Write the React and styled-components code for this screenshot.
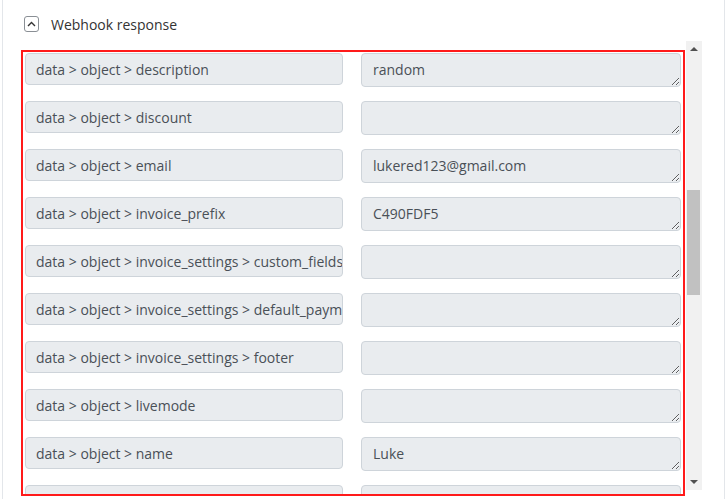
import React from "react";
import styled, { createGlobalStyle } from "styled-components";

const GlobalStyle = createGlobalStyle`
  html, body {
    margin: 0;
    padding: 0;
    background: #ffffff;
    font-family: "Open Sans", "Noto Sans", Arial, sans-serif;
  }
`;

const Panel = styled.div`
  margin-left: 2px;
  width: 721px;
  height: 499px;
  border-left: 1px solid #e3e6ea;
  border-right: 1px solid #e3e6ea;
  overflow: hidden;
`;

const Header = styled.div`
  display: flex;
  align-items: center;
  gap: 12px;
  height: 24px;
  padding: 12px 0 5px 21px;
`;

const ToggleButton = styled.button`
  width: 15px;
  height: 16px;
  padding: 0;
  display: flex;
  align-items: center;
  justify-content: center;
  background: #fff;
  border: 1px solid #8a8f95;
  border-radius: 3px;
  cursor: pointer;
`;

const Title = styled.span`
  font-size: 14px;
  color: #333333;
`;

const Body = styled.div`
  display: flex;
  align-items: flex-start;
  padding-left: 18px;
`;

const Highlight = styled.div`
  margin-top: 9px;
  width: 656px;
  height: 441px;
  border: 2px solid #ff1a1a;
  padding: 1px 2px 0 2px;
  overflow: hidden;
  display: flex;
  flex-direction: column;
  gap: 14px;
  flex-shrink: 0;
`;

const Row = styled.div`
  display: flex;
  gap: 18px;
  flex-shrink: 0;
`;

const Key = styled.div`
  box-sizing: border-box;
  width: 318px;
  height: 32px;
  padding: 1px 10px 0;
  display: flex;
  align-items: center;
  background: #e9ecef;
  border: 1px solid #ced4da;
  border-radius: 4px;
  font-size: 14px;
  color: #495057;
  white-space: nowrap;
  overflow: hidden;
`;

const Value = styled.textarea`
  box-sizing: border-box;
  width: 320px;
  height: 34px;
  margin: 0;
  padding: 6px 11px 4px;
  background: #e9ecef;
  border: 1px solid #ced4da;
  border-radius: 4px;
  font-family: "Open Sans", "Noto Sans", Arial, sans-serif;
  font-size: 14px;
  line-height: 20px;
  color: #495057;
  resize: vertical;
  outline: none;
  overflow: hidden;
`;

const Scrollbar = styled.div`
  width: 16px;
  height: 449px;
  margin-left: 1px;
  flex-shrink: 0;
  background: #f1f1f1;
  position: relative;
`;

const Arrow = styled.div`
  position: absolute;
  left: 4px;
  width: 0;
  height: 0;
  border-left: 4px solid transparent;
  border-right: 4px solid transparent;
  ${(p) =>
    p.$down
      ? `bottom: 6px; border-top: 4px solid #505050;`
      : `top: 6px; border-bottom: 4px solid #505050;`}
`;

const Thumb = styled.div`
  position: absolute;
  left: 1px;
  top: 149px;
  width: 13px;
  height: 105px;
  background: #c1c1c1;
`;

const rows = [
  ["data > object > description", "random"],
  ["data > object > discount", ""],
  ["data > object > email", "lukered123@gmail.com"],
  ["data > object > invoice_prefix", "C490FDF5"],
  ["data > object > invoice_settings > custom_fields", ""],
  ["data > object > invoice_settings > default_payment_method", ""],
  ["data > object > invoice_settings > footer", ""],
  ["data > object > livemode", ""],
  ["data > object > name", "Luke"],
  ["data > object > next_invoice_sequence", "1"],
];

const App = () => {
  return (
    <Panel>
      <GlobalStyle />
      <Header>
        <ToggleButton aria-label="collapse">
          <svg width="9" height="6" viewBox="0 0 9 6">
            <path d="M1 5 L4.5 1.5 L8 5" fill="none" stroke="#333" strokeWidth="1.4" />
          </svg>
        </ToggleButton>
        <Title>Webhook response</Title>
      </Header>
      <Body>
        <Highlight>
          {rows.map(([k, v]) => (
            <Row key={k}>
              <Key>{k}</Key>
              <Value readOnly value={v} />
            </Row>
          ))}
        </Highlight>
        <Scrollbar>
          <Arrow />
          <Thumb />
          <Arrow $down />
        </Scrollbar>
      </Body>
    </Panel>
  );
};

export default App;
